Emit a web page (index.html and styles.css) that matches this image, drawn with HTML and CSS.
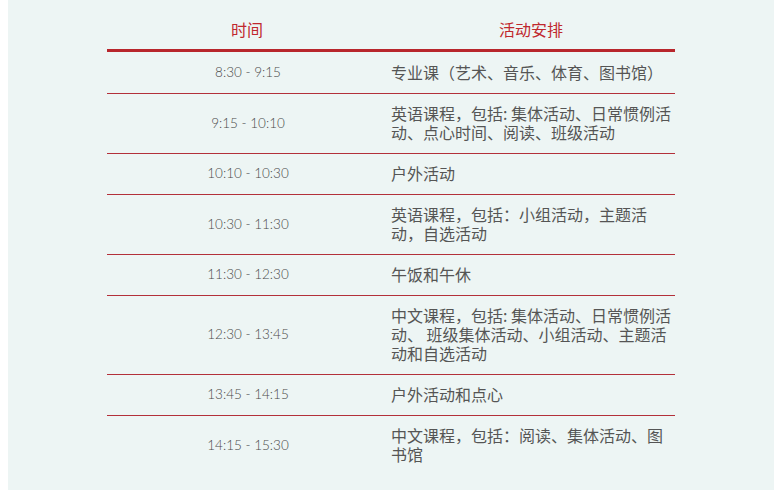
FILE: index.html
```html
<!DOCTYPE html>
<html lang="zh">
<head>
<meta charset="utf-8">
<link rel="stylesheet" href="styles.css">
</head>
<body>
<div class="panel">
  <table class="schedule">
    <colgroup><col class="c-time"><col class="c-act"></colgroup>
    <thead>
      <tr><th>时间</th><th>活动安排</th></tr>
    </thead>
    <tbody>
      <tr><td class="time">8:30 - 9:15</td><td class="act">专业课（艺术、音乐、体育、图书馆）</td></tr>
      <tr><td class="time">9:15 - 10:10</td><td class="act">英语课程，包括: 集体活动、日常惯例活动、点心时间、阅读、班级活动</td></tr>
      <tr><td class="time">10:10 - 10:30</td><td class="act">户外活动</td></tr>
      <tr><td class="time">10:30 - 11:30</td><td class="act">英语课程，包括：小组活动，主题活动，自选活动</td></tr>
      <tr><td class="time">11:30 - 12:30</td><td class="act">午饭和午休</td></tr>
      <tr><td class="time">12:30 - 13:45</td><td class="act">中文课程，包括: 集体活动、日常惯例活动、 班级集体活动、小组活动、主题活动和自选活动</td></tr>
      <tr><td class="time">13:45 - 14:15</td><td class="act">户外活动和点心</td></tr>
      <tr class="last"><td class="time">14:15 - 15:30</td><td class="act">中文课程，包括：阅读、集体活动、图书馆</td></tr>
    </tbody>
  </table>
</div>
</body>
</html>
```

FILE: styles.css
```css
html, body {
  margin: 0;
  background: #ffffff;
}
body {
  padding: 0 8px;
}
.panel {
  background: #edf5f4;
  padding: 10px 0 18px;
  height: 462px;
}
.schedule {
  width: 568px;
  margin: 0 auto;
  border-collapse: collapse;
  table-layout: fixed;
  font-family: "Noto Sans CJK SC", "Noto Sans", sans-serif;
}
.c-time { width: 280px; }
.c-act { width: 288px; }
.schedule th {
  color: #c0282e;
  font-weight: 400;
  font-size: 16px;
  line-height: 19px;
  padding: 10px 4px;
  text-align: center;
  border-bottom: 3px solid #b8262c;
}
.schedule td {
  border-bottom: 1px solid #b3303a;
  padding: 10px 2px 11px 4px;
  line-height: 19px;
  vertical-align: middle;
}
.schedule tr:first-child td {
  padding-top: 11px;
}
.schedule tr.last td {
  border-bottom: none;
}
.time {
  text-align: center;
  font-family: Lato, "Noto Sans", sans-serif;
  font-weight: 300;
  font-size: 13.5px;
  color: #4a4a4a;
}
.act {
  font-size: 16px;
  color: #555555;
  text-align: left;
}
```
